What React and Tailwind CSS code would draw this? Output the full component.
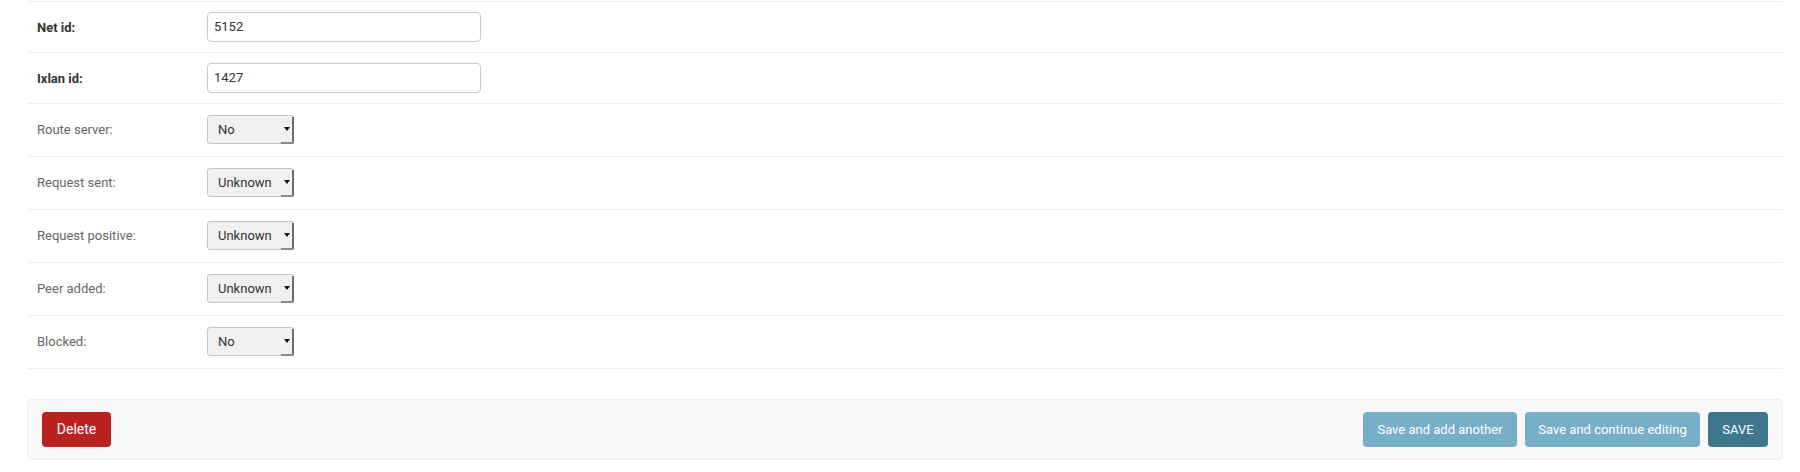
import React from "react";

function Select({ value }) {
  return (
    <div className="relative w-[87px] h-[29px] rounded-[3px] border border-[#c4c4c4] bg-[#f0f0f0] flex items-center pl-[10px] pt-px text-[13px] text-[#333] leading-4">
      <span>{value}</span>
      <div className="absolute right-[-1px] top-[1px] bottom-[-1px] w-[2px] bg-[#6e6e6e] rounded-br-[2px]" />
      <div className="absolute right-0 bottom-[-1px] w-[12px] h-[2px] bg-[#8a8a8a]" />
      <svg className="absolute right-[3px] top-[11px]" width="6" height="4" viewBox="0 0 6 4">
        <path d="M0 0 H6 L3 4 Z" fill="#111" />
      </svg>
    </div>
  );
}

function Row({ label, required, children, select }) {
  return (
    <div className="flex border-b border-[#eee] p-[10px]">
      <div
        className={
          "w-[170px] shrink-0 pr-[10px] pt-[8px] leading-4 text-[13px] " +
          (required ? "font-bold text-[#333]" : "text-[#666]")
        }
      >
        {label}
      </div>
      <div className={select ? "min-h-[32px] pt-px" : "min-h-[30px]"}>{children}</div>
    </div>
  );
}

function TextInput({ value }) {
  return (
    <div className="w-[274px] h-[30px] border border-[#ccc] rounded-[4px] px-[6px] flex items-center text-[13px] text-[#333] bg-white">
      {value}
    </div>
  );
}

export default function App() {
  return (
    <div className="bg-white min-h-[472px] pt-px font-['Roboto','Liberation_Sans',sans-serif] text-[13px] text-[#333]">
      <div className="ml-[27px] mr-[17px]">
        <div className="border-t border-[#eee]">
          <Row label="Net id:" required>
            <TextInput value="5152" />
          </Row>
          <Row label="Ixlan id:" required>
            <TextInput value="1427" />
          </Row>
          <Row label="Route server:" select>
            <Select value="No" />
          </Row>
          <Row label="Request sent:" select>
            <Select value="Unknown" />
          </Row>
          <Row label="Request positive:" select>
            <Select value="Unknown" />
          </Row>
          <Row label="Peer added:" select>
            <Select value="Unknown" />
          </Row>
          <Row label="Blocked:" select>
            <Select value="No" />
          </Row>
        </div>
        <div className="mt-[30px] flex items-center justify-between border border-[#eee] bg-[#f8f8f8] rounded-[4px] px-[14px] py-[12px]">
          <div className="w-[69px] h-[35px] rounded-[4px] bg-[#ba2121] text-white text-[14px] flex items-center justify-center">
            Delete
          </div>
          <div className="flex gap-[8px]">
            <div className="w-[154px] h-[35px] rounded-[4px] bg-[#79aec8] text-white text-[13px] flex items-center justify-center">
              Save and add another
            </div>
            <div className="w-[175px] h-[35px] rounded-[4px] bg-[#79aec8] text-white text-[13px] flex items-center justify-center">
              Save and continue editing
            </div>
            <div className="w-[60px] h-[35px] rounded-[4px] bg-[#417690] text-white text-[13px] flex items-center justify-center">
              SAVE
            </div>
          </div>
        </div>
      </div>
    </div>
  );
}
